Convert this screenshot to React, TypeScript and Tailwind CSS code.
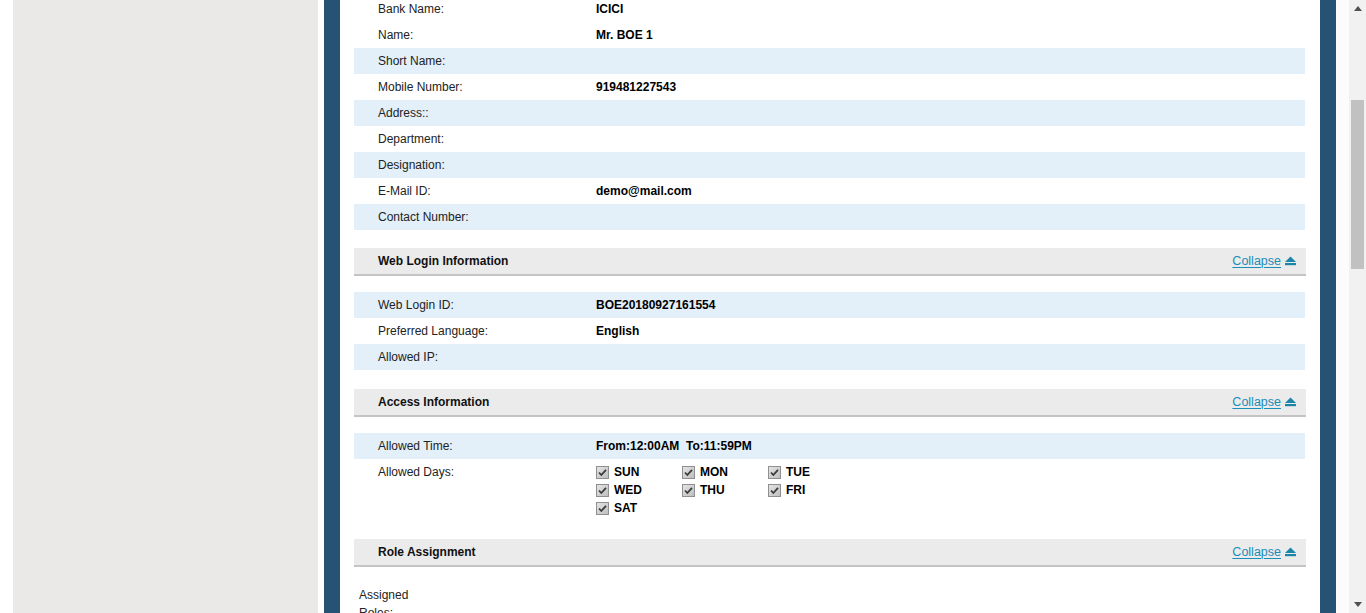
import React from 'react';

type Row = { label: string; value?: string; shaded: boolean };

const personal: Row[] = [
    { label: 'Bank Name:', value: 'ICICI', shaded: false },
    { label: 'Name:', value: 'Mr. BOE 1', shaded: false },
    { label: 'Short Name:', shaded: true },
    { label: 'Mobile Number:', value: '919481227543', shaded: false },
    { label: 'Address::', shaded: true },
    { label: 'Department:', shaded: false },
    { label: 'Designation:', shaded: true },
    { label: 'E-Mail ID:', value: 'demo@mail.com', shaded: false },
    { label: 'Contact Number:', shaded: true },
];

const webLogin: Row[] = [
    { label: 'Web Login ID:', value: 'BOE20180927161554', shaded: true },
    { label: 'Preferred Language:', value: 'English', shaded: false },
    { label: 'Allowed IP:', shaded: true },
];

const days = ['SUN', 'MON', 'TUE', 'WED', 'THU', 'FRI', 'SAT'];

const InfoRow = ({ row }: { row: Row }) => (
    <div className={`flex h-[26px] items-center ${row.shaded ? 'bg-[#e3eff9]' : 'bg-white'}`}>
        <div className="w-[242px] shrink-0 pl-[24px] text-[#222]">{row.label}</div>
        <div className="whitespace-pre font-bold text-black">{row.value}</div>
    </div>
);

const SectionHeader = ({ title }: { title: string }) => (
    <div className="mr-[-1px] flex h-[28px] items-center justify-between border-b-2 border-[#c4c4c4] bg-[#ebebeb] pl-[24px] pr-[10px]">
        <span className="font-bold text-[#111]">{title}</span>
        <span className="flex items-center gap-[4px] text-[12.5px] text-[#1a8db8]">
            <span className="underline decoration-1 underline-offset-2">Collapse</span>
            <svg width="11" height="10" viewBox="0 0 11 10">
                <path d="M5.5 0.5 L11 6 L0 6 Z" fill="#1b86a8" />
                <rect x="0" y="7" width="11" height="2.2" fill="#1b86a8" />
            </svg>
        </span>
    </div>
);

const CheckedBox = () => (
    <svg width="13" height="13" viewBox="0 0 13 13" className="shrink-0">
        <defs>
            <linearGradient id="cbg" x1="0" y1="0" x2="1" y2="1">
                <stop offset="0" stopColor="#e6e6e6" />
                <stop offset="1" stopColor="#bdbdbd" />
            </linearGradient>
        </defs>
        <rect x="0.5" y="0.5" width="12" height="12" fill="url(#cbg)" stroke="#8f8f8f" />
        <path d="M3 6.5 L5.3 9 L10 3.8" fill="none" stroke="#3b3b3b" strokeWidth="1.8" />
    </svg>
);

const App = () => {
    return (
        <div className="flex h-[613px] w-[1366px] overflow-hidden bg-white text-[12px] font-['Liberation_Sans',Arial,sans-serif]">
            <div className="w-[13px] bg-white" />
            <div className="w-[305px] bg-[#ebe9e7]" />
            <div className="w-[6px] bg-white" />
            <div className="w-[16px] bg-[#265273]" />
            <div className="w-[980px] bg-white pl-[14px] pr-[15px]">
                <div className="mt-[-4px]">
                    {personal.map((r) => (
                        <InfoRow key={r.label} row={r} />
                    ))}
                </div>
                <div className="mt-[18px]">
                    <SectionHeader title="Web Login Information" />
                </div>
                <div className="mt-[16px]">
                    {webLogin.map((r) => (
                        <InfoRow key={r.label} row={r} />
                    ))}
                </div>
                <div className="mt-[19px]">
                    <SectionHeader title="Access Information" />
                </div>
                <div className="mt-[16px]">
                    <InfoRow row={{ label: 'Allowed Time:', value: 'From:12:00AM  To:11:59PM', shaded: true }} />
                    <div className="flex pt-[4px]">
                        <div className="w-[242px] shrink-0 pl-[24px] leading-[18px] text-[#222]">Allowed Days:</div>
                        <div className="grid w-[258px] grid-cols-3">
                            {days.map((d) => (
                                <div key={d} className="flex h-[18px] items-center gap-[5px] font-bold text-black">
                                    <CheckedBox />
                                    <span>{d}</span>
                                </div>
                            ))}
                        </div>
                    </div>
                </div>
                <div className="mt-[22px]">
                    <SectionHeader title="Role Assignment" />
                </div>
                <div className="mt-[19px] w-[60px] pl-[5px] leading-[18px] text-[#222]">Assigned Roles:</div>
            </div>
            <div className="w-[16px] bg-[#265273]" />
            <div className="w-[13px] bg-[#fcfcfc]" />
            <div className="flex w-[17px] flex-col items-center bg-[#f1f1f1]">
                <svg width="8" height="5" viewBox="0 0 8 5" className="mt-[6px]">
                    <path d="M0 5 L4 0 L8 5 Z" fill="#505050" />
                </svg>
                <div className="mt-[89px] h-[169px] w-[13px] bg-[#c1c1c1]" />
                <div className="flex-1" />
                <svg width="8" height="5" viewBox="0 0 8 5" className="mb-[6px]">
                    <path d="M0 0 L8 0 L4 5 Z" fill="#505050" />
                </svg>
            </div>
        </div>
    );
};

export default App;
